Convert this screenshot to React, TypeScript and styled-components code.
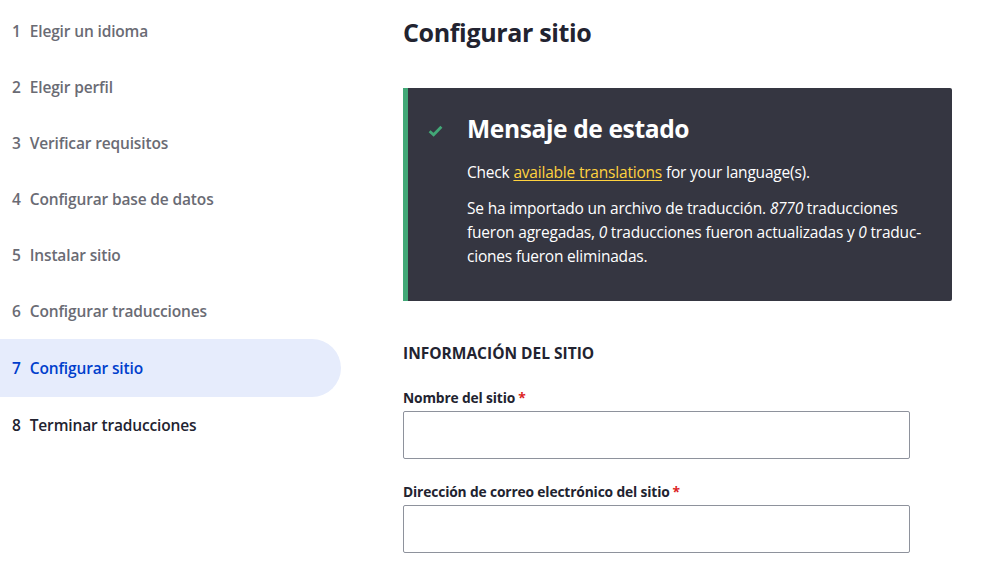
import React from "react";
import styled, { createGlobalStyle } from "styled-components";

const Global = createGlobalStyle`
  html, body { margin: 0; padding: 0; background: #fff; }
  body { font-family: "Open Sans", "Noto Sans", sans-serif; color: #222330; }
  * { box-sizing: border-box; }
`;

const Page = styled.div`
  display: flex;
  align-items: flex-start;
  width: 987px;
  height: 564px;
  overflow: hidden;
`;

const Sidebar = styled.ol`
  list-style: none;
  margin: 0;
  padding: 3px 0 0;
  width: 341px;
  flex: none;
`;

const Step = styled.li<{ $state: "done" | "active" | "todo" }>`
  display: flex;
  align-items: center;
  height: ${(p) => (p.$state === "active" ? 58 : 56)}px;
  padding-left: 12px;
  font-size: 15.5px;
  font-weight: 600;
  letter-spacing: -0.15px;
  color: ${(p) =>
    p.$state === "active" ? "#003ecc" : p.$state === "done" ? "#6a6b74" : "#222330"};
  background: ${(p) => (p.$state === "active" ? "#e6ecfc" : "transparent")};
  border-radius: 0 29px 29px 0;
`;

const StepNum = styled.span`
  margin-right: 9px;
`;

const Main = styled.main`
  margin-left: 62px;
  width: 549px;
  padding-top: 15px;
`;

const Title = styled.h1`
  margin: 0 0 39px;
  font-size: 25px;
  line-height: 34px;
  font-weight: 700;
  letter-spacing: -0.35px;
  color: #222330;
`;

const Message = styled.div`
  display: flex;
  background: #353641;
  border-left: 5px solid #42a877;
  border-radius: 0 2px 2px 0;
  padding: 25px 28px 33px 20px;
  color: #fff;
`;

const IconCol = styled.div`
  width: 39px;
  flex: none;
  padding-top: 7px;
`;

const MsgBody = styled.div`
  flex: 1;
`;

const MsgTitle = styled.h2`
  margin: 0 0 15px;
  font-size: 24.6px;
  line-height: 32px;
  font-weight: 700;
  letter-spacing: -0.4px;
`;

const MsgText = styled.p`
  margin: 0 0 12px;
  font-size: 15.5px;
  line-height: 24px;
  letter-spacing: -0.2px;
  &:last-child { margin-bottom: 0; }
`;

const Link = styled.a`
  color: #ffd23f;
  text-decoration: underline;
  text-underline-offset: 2px;
`;

const Section = styled.h3`
  margin: 42px 0 0;
  font-size: 15.5px;
  line-height: 20px;
  font-weight: 700;
  letter-spacing: 0;
  text-transform: uppercase;
  color: #222330;
`;

const Field = styled.div`
  margin-top: 26px;
  & + & { margin-top: 24px; }
`;

const Label = styled.label`
  display: block;
  margin-bottom: 4px;
  font-size: 13.8px;
  line-height: 18px;
  font-weight: 700;
  letter-spacing: -0.15px;
  color: #222330;
`;

const Req = styled.span`
  color: #dc2323;
  margin-left: 3px;
`;

const Input = styled.input`
  display: block;
  width: 507px;
  height: 48px;
  border: 1px solid #8e929c;
  border-radius: 2px;
  background: #fff;
  font: inherit;
  padding: 0 12px;
`;

const Desc = styled.div`
  margin-top: 10px;
  width: 507px;
  font-size: 13px;
  line-height: 17px;
  color: #55565b;
  letter-spacing: -0.2px;
`;

const Check = () => (
  <svg width="15" height="12" viewBox="0 0 15 12" aria-hidden="true">
    <path d="M1.6 6.2 L5.6 9.8 L13.4 1.8" fill="none" stroke="#42a877" strokeWidth="2.8" />
  </svg>
);

const steps = [
  "Elegir un idioma",
  "Elegir perfil",
  "Verificar requisitos",
  "Configurar base de datos",
  "Instalar sitio",
  "Configurar traducciones",
  "Configurar sitio",
  "Terminar traducciones",
];

export default function App() {
  return (
    <>
      <Global />
      <Page>
        <Sidebar>
          {steps.map((s, i) => (
            <Step key={s} $state={i < 6 ? "done" : i === 6 ? "active" : "todo"}>
              <StepNum>{i + 1}</StepNum>
              {s}
            </Step>
          ))}
        </Sidebar>
        <Main>
          <Title>Configurar sitio</Title>
          <Message role="status">
            <IconCol>
              <Check />
            </IconCol>
            <MsgBody>
              <MsgTitle>Mensaje de estado</MsgTitle>
              <MsgText>
                Check <Link href="#">available translations</Link> for your language(s).
              </MsgText>
              <MsgText>
                Se ha importado un archivo de traducción. <em>8770</em> traducciones
                <br />
                fueron agregadas, <em>0</em> traducciones fueron actualizadas y <em>0</em> traduc-
                <br />
                ciones fueron eliminadas.
              </MsgText>
            </MsgBody>
          </Message>
          <Section>Información del sitio</Section>
          <Field>
            <Label>
              Nombre del sitio<Req>*</Req>
            </Label>
            <Input type="text" />
          </Field>
          <Field>
            <Label>
              Dirección de correo electrónico del sitio<Req>*</Req>
            </Label>
            <Input type="email" />
            <Desc>
              Las direcciones de correo automáticas, como las de registro, se enviarán desde esta dirección.
            </Desc>
          </Field>
        </Main>
      </Page>
    </>
  );
}
